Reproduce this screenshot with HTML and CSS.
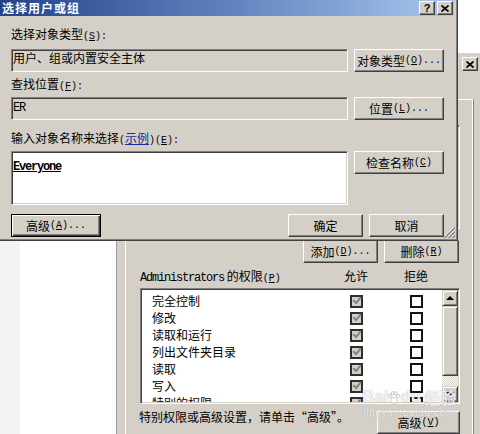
FILE: index.html
```html
<!DOCTYPE html>
<html lang="zh-CN">
<head>
<meta charset="utf-8">
<title>选择用户或组</title>
<link rel="stylesheet" href="styles.css">
</head>
<body>
<div class="screen">
  <div class="bg">
    <div class="ex-strip"></div>
    <div class="ex-white"></div>
    <div class="ex-sep"></div>
    <div class="props">
      <div class="props-top"></div>
      <div class="props-body">
        <div class="close-row">
          <span class="capbtn"><svg width="8" height="7" viewBox="0 0 8 7"><path d="M0.5 0.5L7.5 6.5M7.5 0.5L0.5 6.5" stroke="#000" stroke-width="1.7" fill="none"/></svg></span>
        </div>
        <div class="tab">
          <div class="tab-top">
            <div class="userlist"></div>
          </div>
          <div class="btn-row">
            <button class="btn narrow">添加<span class="m">(<u>D</u>)...</span></button>
            <button class="btn narrow last">删除<span class="m">(<u>R</u>)</span></button>
          </div>
          <div class="perm-head">
            <span><span class="w">Administrators</span> 的权限<span class="m">(<u>P</u>)</span></span>
            <span class="c">允许</span>
            <span></span>
            <span class="c">拒绝</span>
          </div>
          <div class="perm-list">
            <div class="rows">
              <div class="row"><span class="pname">完全控制</span><i class="cb on"></i><span></span><i class="cb"></i></div>
              <div class="row"><span class="pname">修改</span><i class="cb on"></i><span></span><i class="cb"></i></div>
              <div class="row"><span class="pname">读取和运行</span><i class="cb on"></i><span></span><i class="cb"></i></div>
              <div class="row"><span class="pname">列出文件夹目录</span><i class="cb on"></i><span></span><i class="cb"></i></div>
              <div class="row"><span class="pname">读取</span><i class="cb on"></i><span></span><i class="cb"></i></div>
              <div class="row"><span class="pname">写入</span><i class="cb on"></i><span></span><i class="cb"></i></div>
              <div class="row"><span class="pname">特别的权限</span><i class="cb on"></i><span></span><i class="cb"></i></div>
            </div>
            <div class="vscroll">
              <span class="sbtn up"></span>
              <span class="thumb"></span>
              <span class="track"></span>
              <span class="sbtn down"></span>
            </div>
          </div>
          <div class="foot">
            <span class="foot-text">特别权限或高级设置，请单击“高级”。</span>
            <button class="btn adv">高级<span class="m">(<u>V</u>)</span></button>
          </div>
        </div>
      </div>
    </div>
  </div>

  <div class="dlg">
    <div class="titlebar">
      <span class="title">选择用户或组</span>
      <div class="capbtns">
        <span class="capbtn q">?</span>
        <span class="capbtn"><svg width="8" height="7" viewBox="0 0 8 7"><path d="M0.5 0.5L7.5 6.5M7.5 0.5L0.5 6.5" stroke="#000" stroke-width="1.7" fill="none"/></svg></span>
      </div>
    </div>
    <div class="dlg-body">
      <div class="lbl">选择对象类型<span class="m">(<u>S</u>):</span></div>
      <div class="line">
        <div class="edit ro">用户、组或内置安全主体</div>
        <button class="btn wide">对象类型<span class="m">(<u>O</u>)...</span></button>
      </div>
      <div class="lbl gap-s">查找位置<span class="m">(<u>F</u>):</span></div>
      <div class="line tight">
        <div class="edit ro"><span class="w">ER</span></div>
        <button class="btn wide">位置<span class="m">(<u>L</u>)...</span></button>
      </div>
      <div class="lbl gap-l">输入对象名称来选择<span class="m">(</span><span class="link">示例</span><span class="m">)(<u>E</u>):</span></div>
      <div class="line tight">
        <div class="edit memo"><span class="w name">Everyone</span></div>
        <button class="btn wide">检查名称<span class="m">(<u>C</u>)</span></button>
      </div>
      <div class="actions">
        <button class="btn wide focus">高级<span class="m">(<u>A</u>)...</span></button>
        <div class="ok-cancel">
          <button class="btn narrow">确定</button>
          <button class="btn narrow">取消</button>
        </div>
      </div>
    </div>
    <svg class="grip" width="11" height="11" viewBox="0 0 11 11">
      <path d="M10 0L0 10M10 4L4 10M10 8L8 10" stroke="#fff" stroke-width="1" fill="none"/>
      <path d="M11 0.5L0.5 11M11 4.5L4.5 11M11 8.5L8.5 11" stroke="#808080" stroke-width="1.4" fill="none"/>
    </svg>
  </div>

  <div class="watermark">
    <span class="wm-logo">Bai<svg class="paw" width="12" height="13" viewBox="0 0 12 13"><g fill="rgba(255,255,255,0.85)" stroke="rgba(110,110,110,0.5)" stroke-width="0.7"><ellipse cx="6" cy="9.5" rx="3.6" ry="3"/><ellipse cx="2" cy="5" rx="1.5" ry="1.9"/><ellipse cx="4.6" cy="2.3" rx="1.4" ry="1.8"/><ellipse cx="7.6" cy="2.3" rx="1.4" ry="1.8"/><ellipse cx="10.1" cy="5" rx="1.5" ry="1.9"/></g></svg>du<span class="wm-cn">经验</span></span>
    <span class="wm-url">jingyan.baidu.com</span>
  </div>
</div>
</body>
</html>
```

FILE: styles.css
```css
* {
  box-sizing: border-box;
  margin: 0;
  padding: 0;
}

html, body {
  width: 480px;
  height: 434px;
  overflow: hidden;
}

body {
  font-family: "Noto Sans CJK SC", sans-serif;
  font-size: 12px;
  line-height: 14px;
  color: #000;
  background: #d4d0c8;
}

.screen {
  position: relative;
  width: 480px;
  height: 434px;
  overflow: hidden;
}

/* half-width ASCII, SimSun-like: 6px per character */
.m {
  font-family: "Liberation Mono", monospace;
  font-size: 10px;
}

.w {
  font-family: "Liberation Mono", monospace;
  letter-spacing: -1.2px;
}

u {
  text-decoration: underline;
  text-underline-offset: 1px;
}

/* ---------- generic controls ---------- */
.btn {
  display: flex;
  align-items: center;
  justify-content: center;
  height: 23px;
  font: inherit;
  line-height: 14px;
  color: #000;
  background: #d4d0c8;
  border: 1px solid;
  border-color: #fff #404040 #404040 #fff;
  box-shadow: inset -1px -1px #808080;
  white-space: nowrap;
}

.btn.wide { width: 90px; }
.btn.narrow { width: 75px; }

.btn.focus {
  border-color: #000;
  box-shadow: inset 1px 1px #fff, inset -1px -1px #404040, inset -2px -2px #808080;
}

.capbtn {
  display: flex;
  align-items: center;
  justify-content: center;
  width: 16px;
  height: 14px;
  background: #d4d0c8;
  border: 1px solid;
  border-color: #fff #404040 #404040 #fff;
  box-shadow: inset -1px -1px #808080;
}

.capbtn.q {
  font-family: "Liberation Sans", sans-serif;
  font-weight: bold;
  font-size: 11px;
  line-height: 11px;
}

.lbl {
  white-space: nowrap;
}

/* ---------- background window ---------- */
.bg {
  display: flex;
  width: 480px;
  height: 434px;
}

.ex-strip { width: 20px; background: #f3f3f2; }
.ex-white { width: 96px; background: #fff; }
.ex-sep { width: 1px; background: #9c9c9c; }

.props {
  flex: 1;
  display: flex;
  flex-direction: column;
}

.props-top {
  height: 62px;
  background: #fff;
}

.props-body {
  flex: 1;
  display: flex;
  flex-direction: column;
  background: #d4d0c8;
  padding-left: 8px;
}

.close-row {
  display: flex;
  justify-content: flex-end;
  padding: 4px 2px 0 0;
  margin-bottom: 28px;
}

.tab {
  flex: 1;
  margin-right: 6px;
  border-top: 1px solid #fff;
  border-left: 1px solid #fff;
  border-right: 1px solid #808080;
  box-shadow: inset -1px 0 #fff;
  padding: 6px 13px 0 14px;
}

.tab-top {
  height: 134px;
  padding-top: 19px;
}

.userlist {
  height: 104px;
  background: #fff;
  border: 1px solid;
  border-color: #808080 #fff #fff #808080;
  box-shadow: inset 1px 1px #404040, inset -1px -1px #d4d0c8;
}

.btn-row {
  display: flex;
  justify-content: flex-end;
  gap: 6px;
}

.btn.last { margin-right: 1px; }

.perm-head {
  display: grid;
  grid-template-columns: 204px 24px 36px 24px;
  margin-top: 6px;
  white-space: nowrap;
}

.perm-head .c { text-align: center; }

.perm-list {
  display: flex;
  height: 116px;
  margin-top: 2px;
  background: #fff;
  border: 1px solid;
  border-color: #808080 #fff #fff #808080;
  box-shadow: inset 1px 1px #404040, inset -1px -1px #d4d0c8;
  padding: 1px;
}

.rows {
  flex: 1;
  padding-top: 2px;
  overflow: hidden;
}

.row {
  display: grid;
  grid-template-columns: 202px 24px 36px 24px;
  height: 17px;
  line-height: 17px;
}

.pname {
  padding-left: 10px;
  white-space: nowrap;
}

.cb {
  position: relative;
  justify-self: center;
  align-self: start;
  margin-top: 3px;
  width: 13px;
  height: 13px;
  background: #fff;
  border: 2px solid #141414;
}

.cb.on {
  background: #d4d0c8;
  border-color: #2e2e2e;
}

.cb.on::after {
  content: "";
  position: absolute;
  left: 1px;
  top: 0px;
  width: 6px;
  height: 3px;
  border-left: 2px solid #848484;
  border-bottom: 2px solid #848484;
  transform: rotate(-50deg);
}

.vscroll {
  display: flex;
  flex-direction: column;
  width: 16px;
}

.sbtn, .thumb {
  display: flex;
  align-items: center;
  justify-content: center;
  background: #d4d0c8;
  border: 1px solid;
  border-color: #d4d0c8 #404040 #404040 #d4d0c8;
  box-shadow: inset 1px 1px #fff, inset -1px -1px #808080;
}

.sbtn { height: 16px; }
.thumb { height: 70px; }

.sbtn.up::before {
  content: "";
  border-left: 4px solid transparent;
  border-right: 4px solid transparent;
  border-bottom: 4px solid #000;
}

.sbtn.down::before {
  content: "";
  border-left: 4px solid transparent;
  border-right: 4px solid transparent;
  border-top: 4px solid #000;
}

.track {
  flex: 1;
  background-color: #d4d0c8;
  background-image: repeating-conic-gradient(#fff 0 25%, #d4d0c8 0 50%);
  background-size: 2px 2px;
}

.foot {
  display: flex;
  justify-content: space-between;
  align-items: flex-start;
  margin-top: 6px;
}

.foot-text {
  margin-left: -1px;
  white-space: nowrap;
}

.btn.adv {
  width: 83px;
  margin-top: 1px;
}

/* ---------- foreground dialog ---------- */
.dlg {
  position: absolute;
  left: -4px;
  top: -4px;
  width: 462px;
  height: 245px;
  display: flex;
  flex-direction: column;
  background: #d4d0c8;
  border: 1px solid;
  border-color: #d4d0c8 #404040 #404040 #d4d0c8;
  box-shadow: inset 1px 1px #fff, inset -1px -1px #808080;
  padding: 3px;
}

.titlebar {
  display: flex;
  align-items: center;
  justify-content: space-between;
  height: 18px;
  padding: 0 1px 0 2px;
  background: linear-gradient(to right, #24428a, #5f82bd 50%, #a8c7ef);
}

.title {
  color: #fff;
  font-weight: bold;
  font-size: 12px;
  letter-spacing: 1px;
}

.capbtns {
  display: flex;
  gap: 2px;
}

.dlg-body {
  display: flex;
  flex-direction: column;
  padding: 11px 10px 0 11px;
}

.lbl.gap-s { margin-top: 5px; }
.lbl.gap-l { margin-top: 11px; }

.line {
  display: flex;
  align-items: flex-start;
  gap: 6px;
  margin-top: 5px;
}

.line.tight { margin-top: 3px; }

.edit {
  width: 337px;
  height: 23px;
  padding: 1px 1px;
  background: #fff;
  border: 1px solid;
  border-color: #808080 #fff #fff #808080;
  box-shadow: inset 1px 1px #404040, inset -1px -1px #d4d0c8;
  white-space: nowrap;
}

.edit.ro { background: #d4d0c8; }

.edit.memo {
  height: 54px;
  padding: 6px 1px;
}

.name {
  font-weight: bold;
  text-decoration: underline;
  text-underline-offset: 1px;
}

.link {
  color: #1a2a9c;
  text-decoration: underline;
}

.actions {
  display: flex;
  justify-content: space-between;
  margin-top: 9px;
}

.ok-cancel {
  display: flex;
  gap: 6px;
}

.grip {
  position: absolute;
  right: 2px;
  bottom: 2px;
}

/* ---------- watermark ---------- */
.watermark {
  position: absolute;
  left: 362px;
  top: 387px;
  display: flex;
  flex-direction: column;
  align-items: center;
  pointer-events: none;
}

.wm-logo {
  display: flex;
  align-items: center;
  font-family: "Liberation Sans", sans-serif;
  font-weight: bold;
  font-size: 17px;
  line-height: 20px;
  color: rgba(255, 255, 255, 0.85);
  text-shadow: 0 0 1px rgba(80, 80, 80, 0.55);
}

.wm-cn {
  font-family: "Noto Sans CJK SC", sans-serif;
  font-size: 16px;
  margin-left: 3px;
}

.wm-url {
  font-family: "Liberation Sans", sans-serif;
  font-size: 10px;
  line-height: 11px;
  letter-spacing: 0.6px;
  color: rgba(255, 255, 255, 0.8);
  text-shadow: 0 0 1px rgba(80, 80, 80, 0.45);
}
```
